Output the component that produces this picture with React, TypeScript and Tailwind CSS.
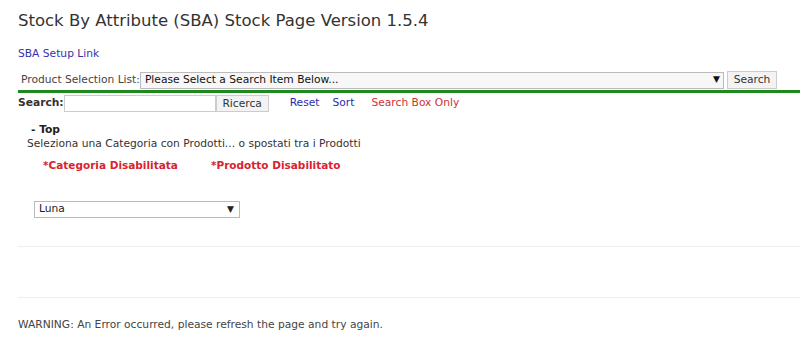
export default function App() {
	return (
		<div className="min-h-[349px] w-[800px] bg-white font-['DejaVu_Sans',Verdana,sans-serif] text-[10.7px] text-[#444] overflow-hidden">
			<div className="pl-[18px] pt-[9px]">
				<h1 className="text-[16.5px] leading-[24px] text-[#333]">Stock By Attribute (SBA) Stock Page Version 1.5.4</h1>
				<a className="mt-[14px] block leading-[14px] text-[#3333aa]" href="#">SBA Setup Link</a>
			</div>

			<div className="mt-[10px] flex items-center pl-[21px] pr-[23px]">
				<span className="leading-[16px]">Product Selection List:</span>
				<div className="flex h-[17px] flex-1 items-center justify-between border border-[#bbb] bg-[#f7f7f7] pl-[4px] pr-[3px] text-[#111]">
					<span>Please Select a Search Item Below...</span>
					<span className="text-[9px]">▼</span>
				</div>
				<button className="ml-[3px] h-[18px] w-[50px] border border-[#ccc] bg-[#f3f3f3] text-[10.7px] text-[#333]">Search</button>
			</div>

			<div className="ml-[18px] mt-[1px] h-[3px] bg-[#1e8a1e]" />

			<div className="mt-[2px] flex items-center pl-[18px]">
				<span className="font-bold text-[#333]">Search:</span>
				<div className="h-[17px] w-[152px] border border-[#ccc] bg-white" />
				<button className="h-[17px] w-[53px] border border-[#ccc] bg-[#f3f3f3] text-[10.7px] text-[#333]">Ricerca</button>
				<a className="ml-[21px] text-[#2b2bb0]" href="#">Reset</a>
				<a className="ml-[13px] text-[#2b2bb0]" href="#">Sort</a>
				<a className="ml-[17px] text-[#cc3333]" href="#">Search Box Only</a>
			</div>

			<div className="mt-[11px] pl-[31px] font-bold leading-[14px] text-[#222]">- Top</div>
			<div className="pl-[27px] leading-[14px] text-[#333]">Seleziona una Categoria con Prodotti... o spostati tra i Prodotti</div>

			<div className="mt-[7px] flex pl-[43px] text-[10.5px] font-bold leading-[14px] text-[#d9232e]">
				<span className="w-[168px]">*Categoria Disabilitata</span>
				<span>*Prodotto Disabilitato</span>
			</div>

			<div className="ml-[34px] mt-[29px] flex h-[17px] w-[206px] items-center justify-between border border-[#bbb] bg-white pl-[4px] pr-[5px] text-[#222]">
				<span>Luna</span>
				<span className="text-[9px]">▼</span>
			</div>

			<div className="ml-[18px] mt-[28px] h-px bg-[#eee]" />
			<div className="ml-[18px] mt-[50px] h-px bg-[#eee]" />

			<p className="mt-[20px] pl-[18px] leading-[14px]">WARNING: An Error occurred, please refresh the page and try again.</p>
		</div>
	)
}
